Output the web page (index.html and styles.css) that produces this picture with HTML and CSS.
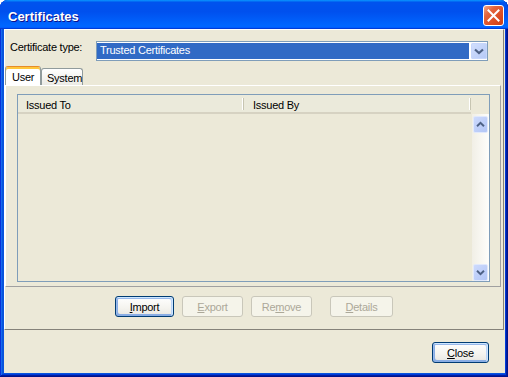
FILE: index.html
```html
<!DOCTYPE html>
<html lang="en">
<head>
  <meta charset="UTF-8" />
  <title>Certificates</title>
  <link rel="stylesheet" href="styles.css">
</head>
<body>

  <div class="window">
    <div class="title-bar">
      <span class="title">Certificates</span>
      <button class="close-x" aria-label="Close">
        <svg width="19" height="19" viewBox="0 0 19 19"><path d="M4.5 4.5 L14.5 14.5 M14.5 4.5 L4.5 14.5" stroke="#fff" stroke-width="2" stroke-linecap="square"/></svg>
      </button>
    </div>

    <div class="frame">
      <div class="main">
        <div class="type-row">
          <label class="type-label">Certificate type:</label>
          <div class="combo">
            <span class="combo-value">Trusted Certificates</span>
            <span class="combo-btn">
              <svg width="16" height="16" viewBox="0 0 16 16"><path d="M4 6.5 L8 10 L12 6.5" fill="none" stroke="#4d6185" stroke-width="2.2"/></svg>
            </span>
          </div>
        </div>

        <div class="tabs">
          <div class="tab active">User</div>
          <div class="tab">System</div>
        </div>

        <div class="tab-panel">
          <div class="list">
            <div class="list-head">
              <div class="col col-to">Issued To</div>
              <div class="col col-by">Issued By</div>
              <div class="corner"></div>
            </div>
            <div class="list-body">
              <div class="rows"></div>
              <div class="scrollbar">
                <div class="sb-btn">
                  <svg width="15" height="15" viewBox="0 0 15 15"><path d="M3.5 9.5 L7.5 5.5 L11.5 9.5" fill="none" stroke="#4d6185" stroke-width="2.2"/></svg>
                </div>
                <div class="sb-btn">
                  <svg width="15" height="15" viewBox="0 0 15 15"><path d="M3.5 5.5 L7.5 9.5 L11.5 5.5" fill="none" stroke="#4d6185" stroke-width="2.2"/></svg>
                </div>
              </div>
            </div>
          </div>
        </div>

        <div class="actions">
          <button class="btn default btn-import"><u>I</u>mport</button>
          <button class="btn btn-export" disabled><u>E</u>xport</button>
          <button class="btn btn-remove" disabled>Re<u>m</u>ove</button>
          <button class="btn btn-details" disabled><u>D</u>etails</button>
        </div>
      </div>

      <div class="footer">
        <button class="btn default btn-close"><u>C</u>lose</button>
      </div>
    </div>
  </div>

</body>
</html>
```

FILE: styles.css
```css
html {
  background-color: #ffffff;
}
body {
  margin: 0;
  font-family: "Liberation Sans", Arial, sans-serif;
  font-size: 11px;
  letter-spacing: -0.25px;
  color: #000000;
}
.window {
  width: 508px;
  height: 377px;
  box-sizing: border-box;
  display: flex;
  flex-direction: column;
  padding: 0 3px 4px 4px;
  background-color: #0855dd;
  border-radius: 8px 8px 0 0;
  box-shadow: inset -1px -1px #00138c, inset 1px 1px #0831d9, inset -2px -2px #001ea0,
    inset 2px 2px #166aee, inset -3px -3px #003bda, inset 3px 3px #0855dd;
}
.title-bar {
  height: 29px;
  flex: none;
  margin: 0 -3px 0 -4px;
  padding: 5px 4px 0 8px;
  box-sizing: border-box;
  display: flex;
  justify-content: space-between;
  align-items: flex-start;
  border-radius: 8px 8px 0 0;
  background: linear-gradient(180deg, #0997ff, #0053ee 8%, #0050ee 40%, #06f 88%, #06f 93%, #005bff 95%, #003dd7 96%, #003dd7);
}
.title {
  color: #ffffff;
  font-weight: bold;
  font-size: 13px;
  letter-spacing: 0;
  line-height: 21px;
  padding-top: 1px;
  text-shadow: 1px 1px #0f1089;
}
.close-x {
  width: 21px;
  height: 21px;
  padding: 0;
  box-sizing: border-box;
  border: 1px solid #ffffff;
  border-radius: 3px;
  display: flex;
  align-items: center;
  justify-content: center;
  background: linear-gradient(135deg, #f2a88a 0%, #e4653d 30%, #d9481f 75%, #c93f18 100%);
}
.frame {
  flex: 1;
  display: flex;
  flex-direction: column;
  background-color: #ece9d8;
}
.main {
  margin-right: 1px;
  border: 1px solid;
  border-color: #ffffff #85827a #85827a #ffffff;
  display: flex;
  flex-direction: column;
}
.type-row {
  display: flex;
  padding: 11px 15px 0 5px;
}
.type-label {
  width: 86px;
  flex: none;
  line-height: 13px;
}
.combo {
  flex: 1;
  height: 20px;
  box-sizing: border-box;
  border: 1px solid #7f9db9;
  background-color: #ffffff;
  padding: 1px 0;
  display: flex;
  gap: 2px;
}
.combo-value {
  flex: 1;
  background-color: #316ac5;
  color: #ffffff;
  padding-left: 3px;
  line-height: 15px;
}
.combo-btn {
  width: 16px;
  flex: none;
  border-radius: 2px;
  background: linear-gradient(135deg, #d3e0fd, #b4c8f6);
  box-shadow: inset 0 0 0 1px #c6d6fb;
}
.tabs {
  display: flex;
  align-items: flex-end;
  margin-top: 5px;
  height: 19px;
}
.tab {
  box-sizing: border-box;
  border: 1px solid #919b9c;
  border-bottom: none;
  border-radius: 3px 3px 0 0;
  display: flex;
  align-items: center;
}
.tab.active {
  width: 36px;
  height: 19px;
  padding: 1px 0 0 6px;
  background-color: #ffffff;
  border-top: 1px solid #e68b2c;
  box-shadow: inset 0 2px #ffc73c;
}
.tab:not(.active) {
  width: 42px;
  height: 17px;
  padding: 1px 0 0 5px;
  background: linear-gradient(#ffffff, #f3f2ee 60%, #ecebe5);
}
.tab-panel {
  height: 202px;
  flex: none;
  box-sizing: border-box;
  margin-right: 2px;
  border: 1px solid;
  border-color: #ffffff #a0a0a0 #a0a0a0 #ffffff;
  padding: 8px 10px 4px 11px;
  display: flex;
}
.list {
  flex: 1;
  border: 1px solid #7f9db9;
  display: flex;
  flex-direction: column;
  background-color: #ece9d8;
}
.list-head {
  height: 19px;
  flex: none;
  display: flex;
}
.col {
  position: relative;
  box-sizing: border-box;
  background-color: #ebeadb;
  border-bottom: 2px solid #d6d2c2;
  padding: 2px 0 0 8px;
  display: flex;
  align-items: center;
}
.col::after {
  content: "";
  position: absolute;
  right: 0;
  top: 3px;
  bottom: 2px;
  width: 1px;
  background-color: #c7c5b2;
  box-shadow: -1px 0 #ffffff;
}
.col-to {
  width: 226px;
}
.col-by {
  width: 227px;
  padding-left: 9px;
}
.corner {
  flex: 1;
}
.list-body {
  flex: 1;
  display: flex;
}
.rows {
  flex: 1;
}
.scrollbar {
  width: 17px;
  flex: none;
  box-sizing: border-box;
  padding: 2px 1px 0 1px;
  display: flex;
  flex-direction: column;
  justify-content: space-between;
  background: linear-gradient(to right, #f1efe6, #fefefb);
}
.sb-btn {
  height: 17px;
  box-sizing: border-box;
  border: 1px solid #e1e9fc;
  border-radius: 2px;
  background: linear-gradient(135deg, #cddafd, #b2c6f6);
  display: flex;
  align-items: center;
  justify-content: center;
}
.actions {
  display: flex;
  justify-content: center;
  gap: 8px;
  padding: 9px 0 12px;
}
.btn {
  height: 21px;
  box-sizing: border-box;
  padding: 0;
  border: 1px solid #003c74;
  border-radius: 3px;
  font: inherit;
  letter-spacing: inherit;
  color: #000000;
  background: linear-gradient(#ffffff, #f4f3ee 60%, #ecebe6 86%, #d6d0c5);
}
.btn.default {
  box-shadow: inset -1px 1px #cee7ff, inset 1px 2px #98b8ea, inset -2px 2px #bcd4f6,
    inset 1px -1px #89ade4, inset 2px -2px #89ade4;
}
.btn:disabled {
  border-color: #c9c7ba;
  color: #aca899;
  background: #f5f4ea;
}
.btn-import {
  width: 59px;
}
.btn-export,
.btn-remove {
  width: 61px;
}
.btn-details {
  width: 63px;
  margin-left: 10px;
}
.footer {
  flex: 1;
  display: flex;
  justify-content: flex-end;
  align-items: flex-start;
  padding: 12px 16px 0 0;
}
.btn-close {
  width: 57px;
}
```
